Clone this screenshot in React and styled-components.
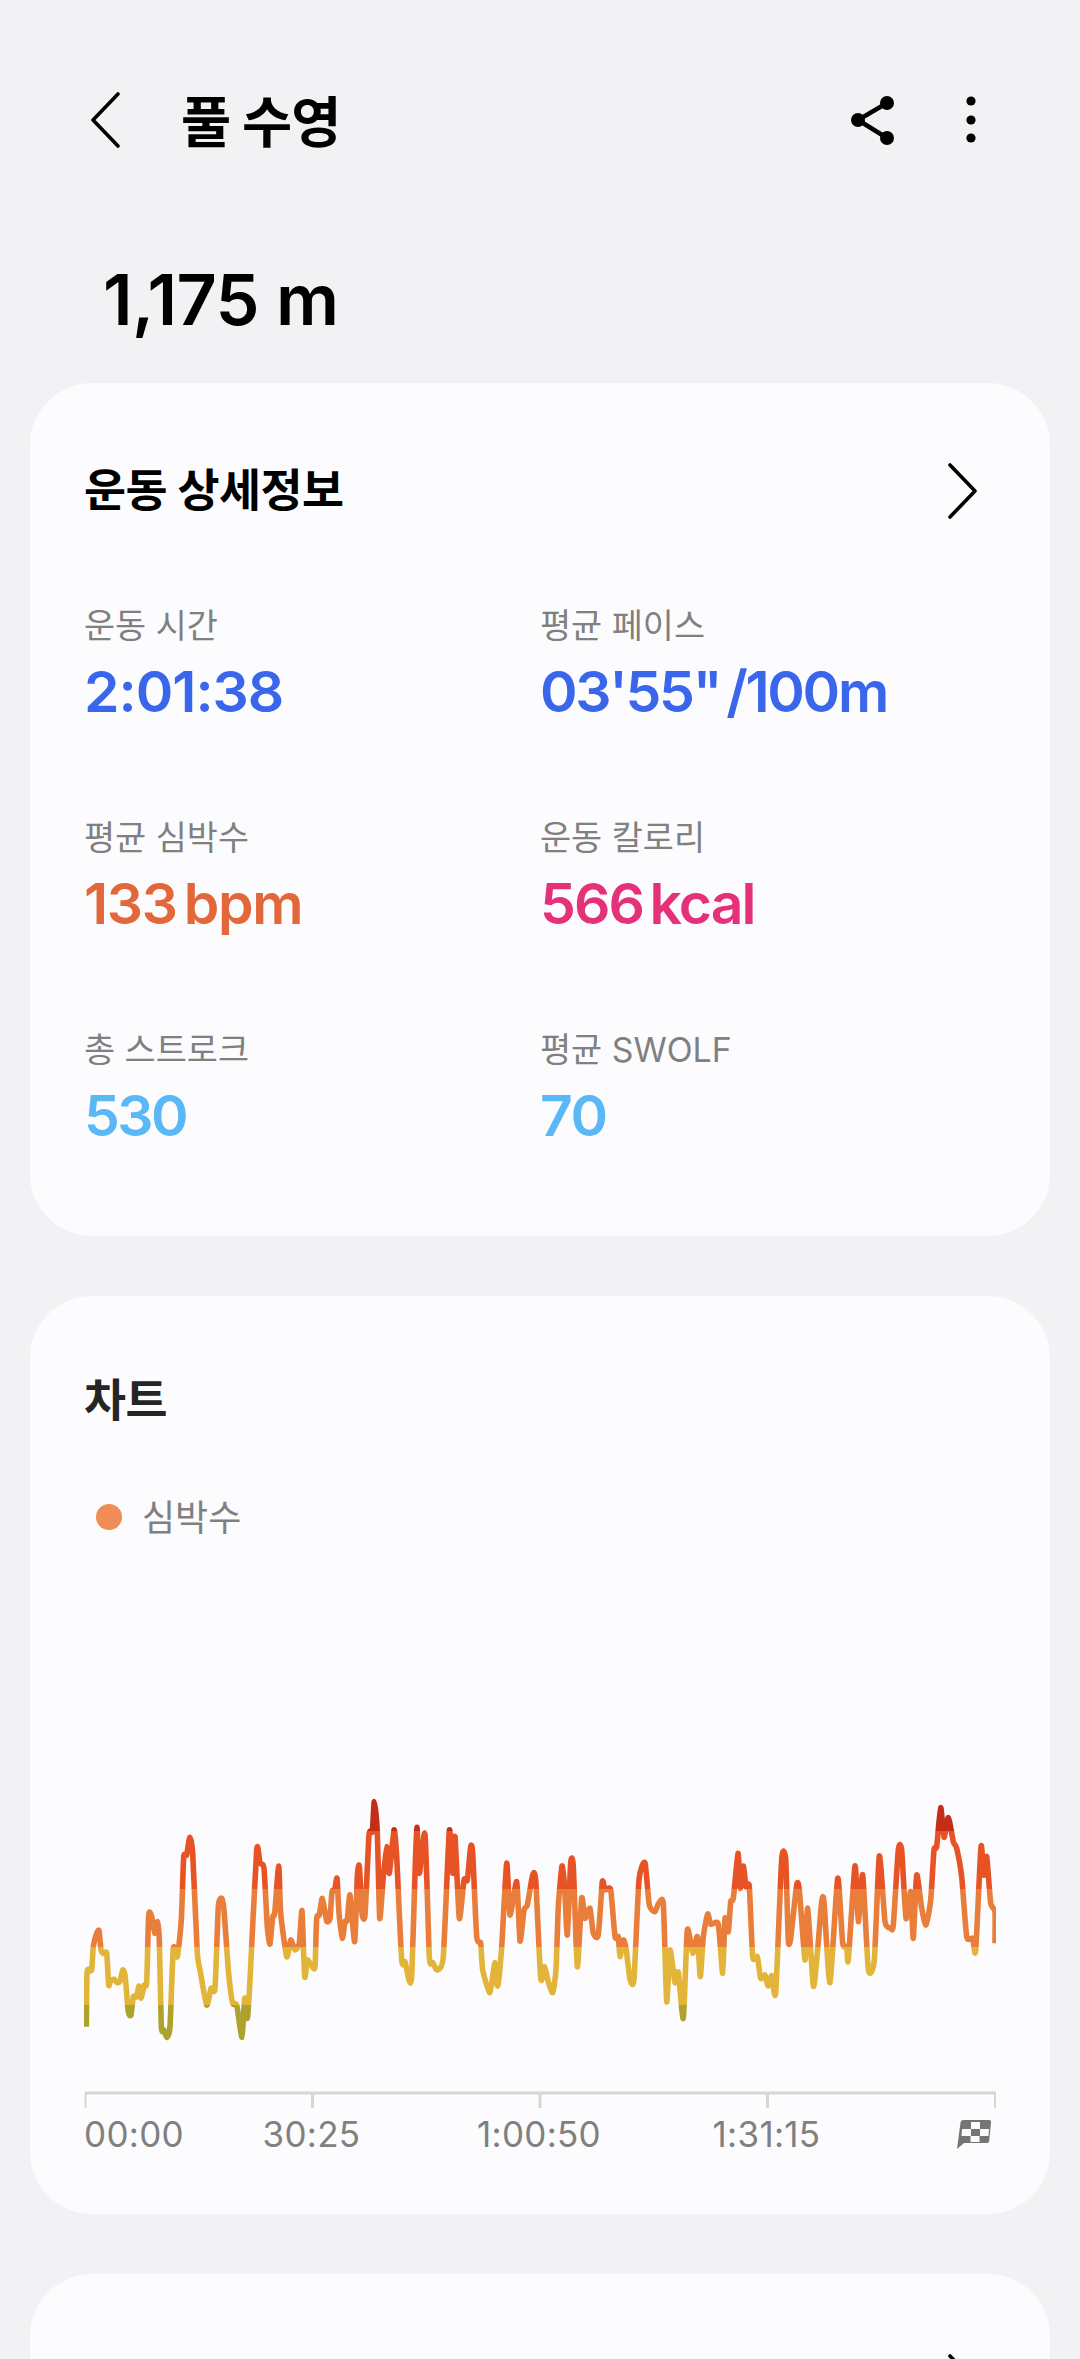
import React from "react";
import styled, { createGlobalStyle } from "styled-components";

const GlobalStyle = createGlobalStyle`
  html, body {
    margin: 0;
    padding: 0;
    background: #f2f2f4;
  }
  body {
    font-family: Inter, "Noto Sans CJK KR", sans-serif;
  }
`;

const Page = styled.div`
  width: 1080px;
  height: 2359px;
  overflow: hidden;
  padding: 0 30px;
  box-sizing: border-box;
  background: #f2f2f4;
`;

const TopBar = styled.header`
  display: flex;
  align-items: center;
  height: 80px;
  margin-top: 80px;
  padding: 0 74px 0 60px;
  color: #000;
`;

const Title = styled.h1`
  flex: 1;
  margin: 4px 0 0 61px;
  font-size: 54.5px;
  line-height: 80px;
  font-weight: 700;
  letter-spacing: -1px;
`;

const Hero = styled.div`
  margin: 90px 0 0 73px;
  height: 100px;
  font-size: 70px;
  line-height: 100px;
  font-weight: 600;
  letter-spacing: -0.6px;
  color: #000;
`;

const Card = styled.section`
  margin-top: ${(p) => p.$gap}px;
  padding: ${(p) => p.$top}px 54px ${(p) => p.$bottom}px;
  border-radius: 62px;
  background: #fcfcfe;
`;

const CardHead = styled.div`
  display: flex;
  align-items: center;
  justify-content: space-between;
  height: 56px;
`;

const CardTitle = styled.h2`
  margin: 0;
  font-size: ${(p) => p.$size}px;
  line-height: 56px;
  font-weight: 700;
  letter-spacing: -0.5px;
  color: ${(p) => p.$color};
`;

const StatGrid = styled.div`
  display: grid;
  grid-template-columns: 456px 1fr;
  row-gap: 90px;
  margin-top: 85px;
`;

const Stat = styled.div`
  display: flex;
  flex-direction: column;
  height: 122px;
`;

const StatLabel = styled.div`
  font-size: 33.8px;
  line-height: 44px;
  color: #808080;
`;

const StatValue = styled.div`
  margin-top: 10px;
  font-size: 57px;
  line-height: 68px;
  font-weight: 600;
  letter-spacing: ${(p) => p.$tracking}px;
  word-spacing: -6px;
  color: ${(p) => p.$color};
`;

const Legend = styled.div`
  display: flex;
  align-items: center;
  gap: 20px;
  height: 44px;
  margin: 66px 0 0 12px;
`;

const LegendDot = styled.span`
  width: 26px;
  height: 26px;
  border-radius: 50%;
  background: #f28c56;
`;

const LegendText = styled.span`
  margin-top: 2px;
  font-size: 36px;
  line-height: 44px;
  color: #808080;
`;

const ChartSvg = styled.svg`
  display: block;
  width: 912px;
  height: 571px;
`;

const AxisLabels = styled.div`
  display: grid;
  grid-template-columns: repeat(4, 227.5px);
  height: 44px;
  margin: 2px 0 0 0;
`;

const AxisCell = styled.div`
  display: flex;
  align-items: center;
  justify-content: space-between;
`;

const AxisText = styled.span`
  font-size: 35px;
  line-height: 44px;
  letter-spacing: 0.3px;
  color: #808080;
  transform: ${(p) => (p.$centered ? "translateX(-50%)" : "none")};
`;

const Glyph = styled.svg`
  display: block;
  flex: none;
  overflow: visible;
  margin-right: ${(p) => p.$right || 0}px;
`;

const BackIcon = () => (
  <Glyph width="30" height="56" viewBox="0 0 30 56" fill="none" stroke="#000" strokeWidth="3.6" strokeLinecap="round" strokeLinejoin="round">
    <path d="M28 2 L3 28 L28 54" />
  </Glyph>
);

const NextIcon = () => (
  <Glyph $right={18} width="30" height="56" viewBox="0 0 30 56" fill="none" stroke="#000" strokeWidth="3.6" strokeLinecap="round" strokeLinejoin="round">
    <path d="M2 2 L27 28 L2 54" />
  </Glyph>
);

const ShareIcon = () => (
  <Glyph $right={71} width="44" height="50" viewBox="0 0 44 50">
    <path d="M36 8 L7 25 L36 43" fill="none" stroke="#000" strokeWidth="4.5" />
    <circle cx="36" cy="8" r="7" />
    <circle cx="7" cy="25" r="7" />
    <circle cx="36" cy="43" r="7" />
  </Glyph>
);

const DotsIcon = () => (
  <Glyph width="10" height="48" viewBox="0 0 10 48">
    <circle cx="5" cy="5" r="4.6" />
    <circle cx="5" cy="24" r="4.6" />
    <circle cx="5" cy="42" r="4.6" />
  </Glyph>
);

const FlagIcon = () => (
  <Glyph width="40" height="34" viewBox="0 0 40 34">
    <path d="M9 3 H35 Q37.5 3 37 5.5 L35.2 24 Q35 26 33 26 H10 L3 32 L6.5 5.5 Q6.8 3 9 3 Z" fill="#757575" />
    <path d="M17 5 H26 V12 H17 Z M8 12 H17 V19 H7.5 Z M26 12 H35 L34.5 19 H26 Z M16.5 19 H25.5 V25 H16.5 Z" fill="#fcfcfe" />
  </Glyph>
);

// traced from the workout, [x, y] in page pixels
const toPage = (offset, pts) => pts.map(([x, y]) => [offset + x / 3, 1740 + y / 3]);

const firstHalf = [
  [139,860],[141,700],[147,688],[155,690],[160,620],[170,580],[177,572],[183,630],[190,640],[200,640],[206,735],[212,722],[222,718],[232,728],[240,724],[248,690],[255,705],[265,815],[273,825],[280,770],[290,770],[297,738],[303,775],[313,735],[320,728],[326,525],[335,530],[344,580],[352,545],[358,600],[364,860],[372,870],[381,892],[390,860],[400,625],[412,650],[424,540],[431,352],[440,345],[449,292],[458,340],[472,640],[480,690],[500,795],[513,745],[525,745],[535,500],[545,475],[552,510],[565,690],[578,790],[590,795],[606,892],[614,775],[622,835],[630,720],[650,330],[660,370],[672,385],[682,560],[690,612],[698,530],[704,520],[716,378],[722,520],[740,650],[752,600],[765,630],[778,610],[786,512],[794,710],[802,660],[815,678],[825,680],[830,535],[838,525],[847,475],[860,543],[870,535],[876,455],[884,450],[891,415],[897,520],[907,595],[915,545],[922,540],[930,465],[944,605],[952,410],[958,378],[966,520],[975,525],[987,285],[997,275],[1003,185],[1012,280],[1019,535],[1030,410],[1040,320],[1048,400],[1062,270],[1070,350],[1085,660],[1095,665],[1107,720],[1115,710],[1125,400],[1131,262],[1138,400],[1155,282],[1168,650],[1178,668],[1192,690],[1210,650],[1228,272],[1238,400],[1245,290],[1258,535],[1272,420],[1282,420],[1292,320],[1298,340],[1310,590],[1322,610],[1328,690],[1350,758],[1364,668],[1373,738],[1385,620],[1400,370],[1410,525],[1430,425],[1440,603],[1452,510],[1462,495],[1478,405],[1487,420],[1502,715],
];

const secondHalf = [
  [14,680],[25,725],[38,758],[48,690],[55,500],[66,378],[74,445],[82,585],[92,368],[100,380],[112,680],[125,475],[135,535],[150,505],[160,580],[175,585],[187,425],[195,450],[212,450],[225,590],[235,590],[240,650],[250,600],[258,625],[270,718],[282,718],[297,420],[315,368],[328,495],[345,515],[355,492],[370,492],[380,785],[390,630],[405,728],[415,697],[430,835],[442,570],[458,640],[472,590],[481,710],[490,590],[503,522],[512,553],[535,553],[548,700],[555,535],[565,575],[572,485],[580,475],[594,340],[601,445],[610,378],[618,440],[628,440],[638,650],[652,650],[662,715],[675,705],[684,738],[695,707],[707,758],[725,358],[737,358],[745,600],[752,595],[770,435],[778,450],[795,660],[803,505],[820,738],[832,640],[845,485],[852,485],[870,728],[893,415],[908,610],[920,620],[925,660],[945,378],[955,545],[968,405],[985,688],[1003,660],[1018,348],[1035,545],[1052,565],[1060,555],[1075,330],[1085,330],[1098,535],[1112,455],[1120,595],[1130,405],[1145,505],[1158,555],[1172,480],[1182,330],[1190,320],[1202,203],[1212,292],[1225,233],[1240,305],[1250,325],[1265,410],[1280,590],[1298,595],[1307,632],[1323,320],[1331,405],[1340,350],[1352,490],[1365,515],[1365,610],
];

const heartRate = [...toPage(40, firstHalf), ...toPage(540, secondHalf)];

const smoothPath = (pts) => {
  const k = 0.1;
  let d = `M${pts[0][0].toFixed(1)} ${pts[0][1].toFixed(1)}`;
  for (let i = 0; i < pts.length - 1; i++) {
    const p0 = pts[Math.max(i - 1, 0)];
    const p1 = pts[i];
    const p2 = pts[i + 1];
    const p3 = pts[Math.min(i + 2, pts.length - 1)];
    const c1 = [p1[0] + (p2[0] - p0[0]) * k, p1[1] + (p2[1] - p0[1]) * k];
    const c2 = [p2[0] - (p3[0] - p1[0]) * k, p2[1] - (p3[1] - p1[1]) * k];
    d += `C${c1[0].toFixed(1)} ${c1[1].toFixed(1)} ${c2[0].toFixed(1)} ${c2[1].toFixed(1)} ${p2[0].toFixed(1)} ${p2[1].toFixed(1)}`;
  }
  return d;
};

const zones = [
  { color: "#c42d17", from: 1700, to: 1831 },
  { color: "#e85325", from: 1831, to: 1888.5 },
  { color: "#e97e3a", from: 1888.5, to: 1947 },
  { color: "#e2b53a", from: 1947, to: 2005 },
  { color: "#aca22d", from: 2005, to: 2100 },
];

const ticks = [85.5, 312.5, 540, 767.5, 995];

const HeartChart = () => (
  <ChartSvg viewBox="84 1539 912 571">
    <defs>
      <linearGradient id="hrZones" gradientUnits="userSpaceOnUse" x1="0" y1="1700" x2="0" y2="2100">
        {zones.flatMap((z) => [
          <stop key={z.color + "a"} offset={(z.from - 1700) / 400} stopColor={z.color} />,
          <stop key={z.color + "b"} offset={(z.to - 1700) / 400} stopColor={z.color} />,
        ])}
      </linearGradient>
    </defs>
    <path d={smoothPath(heartRate)} fill="none" stroke="url(#hrZones)" strokeWidth="5.6" strokeLinejoin="round" />
    <path d="M85 2093 H996" stroke="#d6d6d6" strokeWidth="3" />
    {ticks.map((x) => (
      <path key={x} d={`M${x} 2093 V2108`} stroke="#d6d6d6" strokeWidth={x === 85.5 || x === 995 ? 2 : 3} />
    ))}
  </ChartSvg>
);

const stats = [
  { label: "운동 시간", value: "2:01:38", color: "#3a66ec", tracking: -1 },
  { label: "평균 페이스", value: "03'55\" /100m", color: "#3a66ec", tracking: -2.3 },
  { label: "평균 심박수", value: "133 bpm", color: "#e2673a", tracking: -1.3 },
  { label: "운동 칼로리", value: "566 kcal", color: "#e5307a", tracking: -1.9 },
  { label: "총 스트로크", value: "530", color: "#59b8f5", tracking: -2.5 },
  { label: "평균 SWOLF", value: "70", color: "#59b8f5", tracking: -1.5 },
];

export default function App() {
  return (
    <Page>
      <GlobalStyle />
      <TopBar>
        <BackIcon />
        <Title>풀 수영</Title>
        <ShareIcon />
        <DotsIcon />
      </TopBar>
      <Hero>1,175 m</Hero>

      <Card $gap={33} $top={80} $bottom={86}>
        <CardHead>
          <CardTitle $size={45.7} $color="#000">운동 상세정보</CardTitle>
          <NextIcon />
        </CardHead>
        <StatGrid>
          {stats.map((s) => (
            <Stat key={s.label}>
              <StatLabel>{s.label}</StatLabel>
              <StatValue $color={s.color} $tracking={s.tracking}>{s.value}</StatValue>
            </Stat>
          ))}
        </StatGrid>
      </Card>

      <Card $gap={60} $top={77} $bottom={58}>
        <CardTitle $size={45.7} $color="#252525">차트</CardTitle>
        <Legend>
          <LegendDot />
          <LegendText>심박수</LegendText>
        </Legend>
        <HeartChart />
        <AxisLabels>
          <AxisCell>
            <AxisText>00:00</AxisText>
          </AxisCell>
          <AxisCell>
            <AxisText $centered>30:25</AxisText>
          </AxisCell>
          <AxisCell>
            <AxisText $centered>1:00:50</AxisText>
          </AxisCell>
          <AxisCell>
            <AxisText $centered>1:31:15</AxisText>
            <FlagIcon />
          </AxisCell>
        </AxisLabels>
      </Card>

      <Card $gap={60} $top={80} $bottom={86}>
        <CardHead>
          <span />
          <NextIcon />
        </CardHead>
      </Card>
    </Page>
  );
}
